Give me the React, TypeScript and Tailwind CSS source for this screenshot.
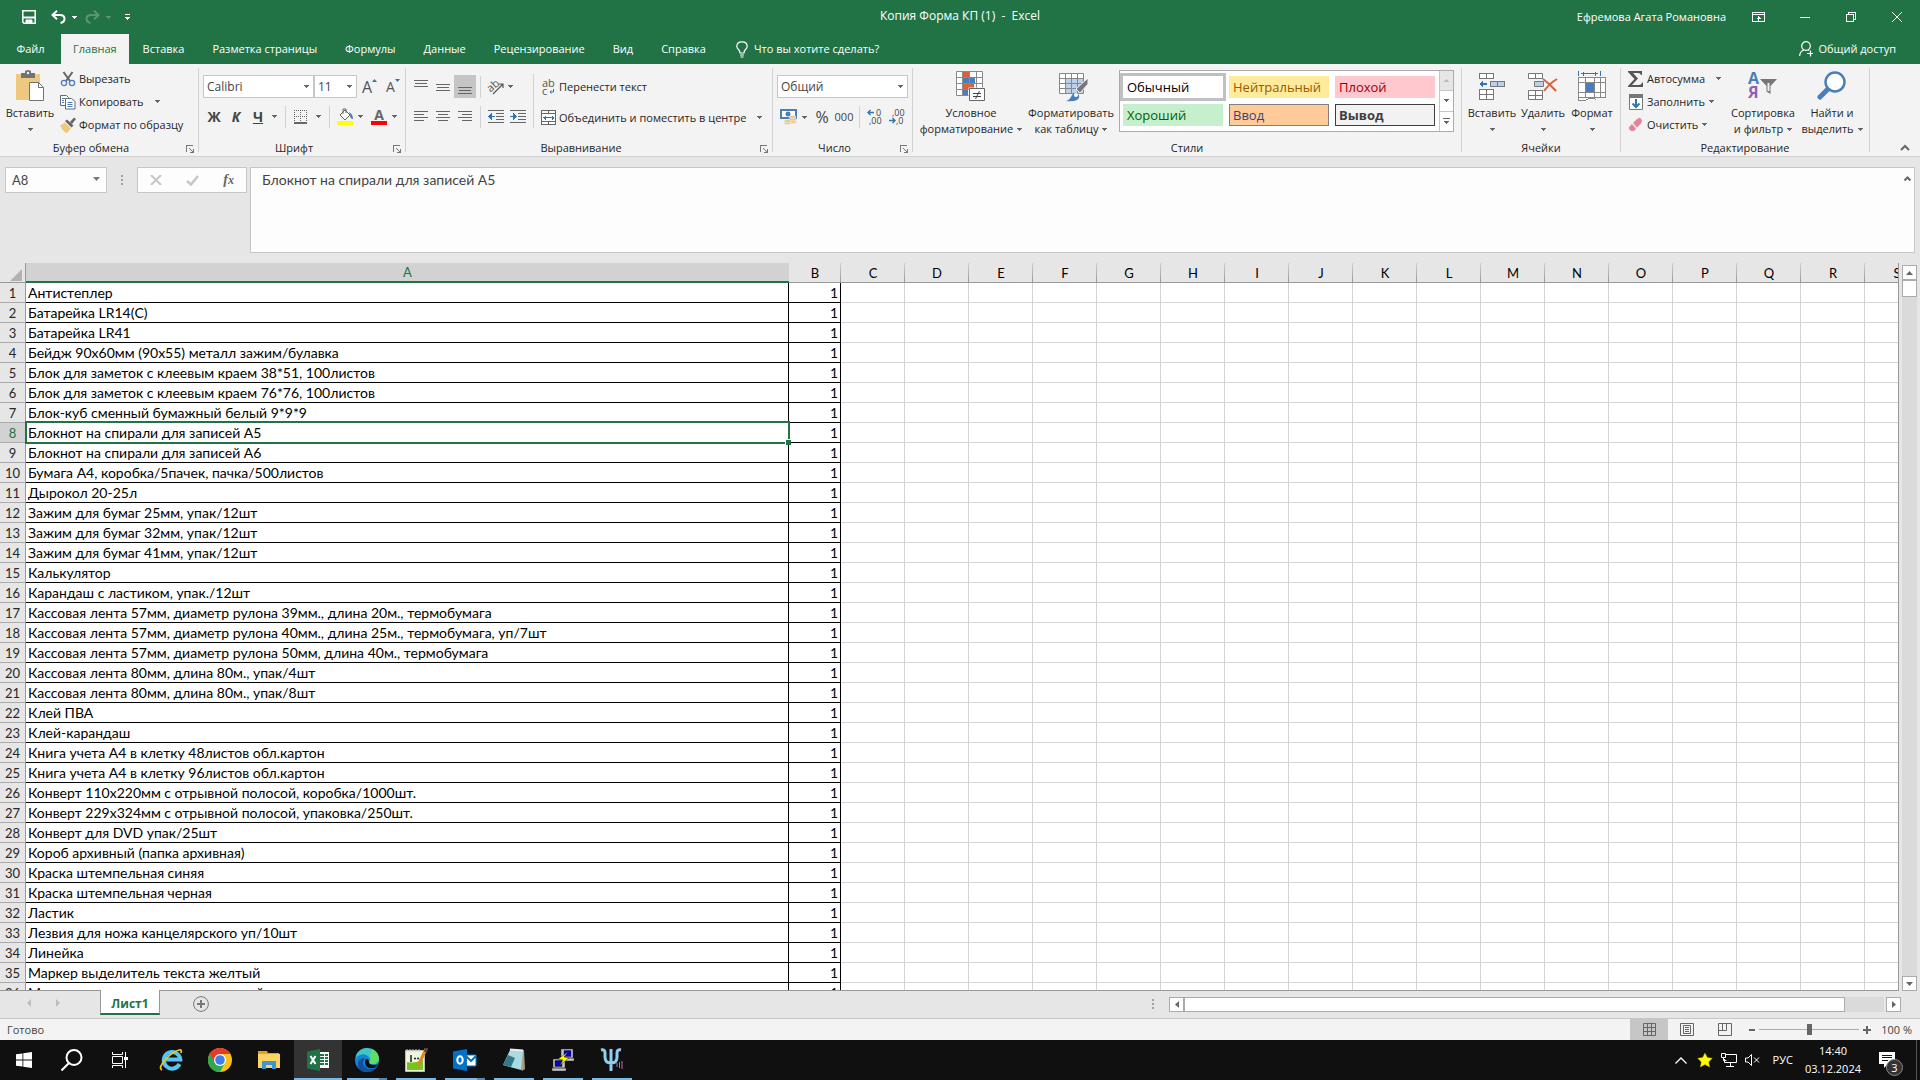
import { type FC, type ReactNode } from "react";

const items = [
  "Антистеплер",
  "Батарейка LR14(С)",
  "Батарейка LR41",
  "Бейдж 90х60мм (90х55) металл зажим/булавка",
  "Блок для заметок с клеевым краем 38*51, 100листов",
  "Блок для заметок с клеевым краем 76*76, 100листов",
  "Блок-куб сменный бумажный белый 9*9*9",
  "Блокнот на спирали для записей А5",
  "Блокнот на спирали для записей А6",
  "Бумага А4, коробка/5пачек, пачка/500листов",
  "Дырокол 20-25л",
  "Зажим для бумаг 25мм, упак/12шт",
  "Зажим для бумаг 32мм, упак/12шт",
  "Зажим для бумаг 41мм, упак/12шт",
  "Калькулятор",
  "Карандаш с ластиком, упак./12шт",
  "Кассовая лента 57мм, диаметр рулона 39мм., длина 20м., термобумага",
  "Кассовая лента 57мм, диаметр рулона 40мм., длина 25м., термобумага, уп/7шт",
  "Кассовая лента 57мм, диаметр рулона 50мм, длина 40м., термобумага",
  "Кассовая лента 80мм, длина 80м., упак/4шт",
  "Кассовая лента 80мм, длина 80м., упак/8шт",
  "Клей ПВА",
  "Клей-карандаш",
  "Книга учета А4 в клетку 48листов обл.картон",
  "Книга учета А4 в клетку 96листов обл.картон",
  "Конверт 110х220мм с отрывной полосой, коробка/1000шт.",
  "Конверт 229х324мм с отрывной полосой, упаковка/250шт.",
  "Конверт для DVD упак/25шт",
  "Короб архивный (папка архивная)",
  "Краска штемпельная синяя",
  "Краска штемпельная черная",
  "Ластик",
  "Лезвия для ножа канцелярского уп/10шт",
  "Линейка",
  "Маркер выделитель текста желтый",
  "Маркер выделитель текста зеленый",
];

const emptyColumns = "CDEFGHIJKLMNOPQRS".split("");
const tabs = ["Вставка", "Разметка страницы", "Формулы", "Данные", "Рецензирование", "Вид", "Справка"];

const Arrow: FC<{ className?: string }> = ({ className = "text-[#666]" }) => (
  <svg width="5" height="3" viewBox="0 0 5 3" className={`shrink-0 ${className}`} shapeRendering="crispEdges">
    <path d="M0 0h5v1H0zM1 1h3v1H1zM2 2h1v1H2z" fill="currentColor" />
  </svg>
);

const Dots = () => (
  <svg width="2" height="10" className="shrink-0" fill="#a0a0a0">
    <path d="M0 0h2v2H0zM0 4h2v2H0zM0 8h2v2H0z" />
  </svg>
);

/* ---------- ribbon icons ---------- */

const PasteIcon = () => (
  <svg width="30" height="32" viewBox="0 0 30 32">
    <path d="M1 4h24v26H1z" fill="#edc87e" />
    <path d="M6 3h4V1.500Q10 0 13 0t3 1.500V3h4v5H6z" fill="#737373" />
    <circle cx="13" cy="3" r="1.200" fill="#f3f3f3" />
    <path d="M14.500 12.500h9l5 5v13h-14z" fill="#fff" stroke="#737373" />
    <path d="M23.500 12.500v5h5" fill="none" stroke="#737373" />
  </svg>
);

const CutIcon = () => (
  <svg width="16" height="16" viewBox="0 0 16 16" fill="none">
    <path d="M3.500 1l6.500 9M12.500 1L6 10" stroke="#666" strokeWidth="2" />
    <circle cx="4" cy="12" r="2.600" stroke="#4a7ebb" strokeWidth="1.300" />
    <circle cx="12" cy="12" r="2.600" stroke="#4a7ebb" strokeWidth="1.300" />
  </svg>
);

const CopyIcon = () => (
  <svg width="16" height="16" viewBox="0 0 16 16" fill="#fff" stroke="#6a6a6a">
    <path d="M.5 1.500h6l2 2v8h-8z" />
    <path d="M5.500 4.500h6l3.500 3v7.500H5.500z" />
    <path d="M2 4.500h3M2 6.500h2M2 8.500h2M7.500 8.500h5M7.500 10.500h5M7.500 12.500h5" stroke="#4a7ebb" />
  </svg>
);

const BrushIcon = () => (
  <svg width="16" height="16" viewBox="0 0 16 16">
    <path d="M0 8.500l5-3 6 6-4 4.500q-3 0-7-7.500z" fill="#edc87e" />
    <path d="M5 4l2-1.500 6.500 6-2 2zM10 5l4-4.500L16 2l-4 5z" fill="#666" />
  </svg>
);

const AlignIcon: FC<{ d: string }> = ({ d }) => (
  <svg width="14" height="14" viewBox="0 0 14 14" stroke="#666" shapeRendering="crispEdges">
    <path d={d} />
  </svg>
);

const BordersIcon = () => (
  <svg width="14" height="14" viewBox="0 0 14 14" stroke="#666" shapeRendering="crispEdges" fill="none">
    <path d="M0 .5h13M.5 0v13M12.500 0v13M6.500 0v13M0 6.500h13" strokeDasharray="1 1" />
    <path d="M0 12.500h13" strokeWidth="2" />
  </svg>
);

const FillIcon = () => (
  <svg width="17" height="17" viewBox="0 0 17 17">
    <path d="M3 7l5-5 5 5-5 5z" fill="#fff" stroke="#666" />
    <path d="M6 6V1h3v4" fill="none" stroke="#666" />
    <path d="M12 4q4 2 4 7-3 0-3-4z" fill="#4a7ebb" />
    <path d="M0 13h16v4H0z" fill="#ff0" />
  </svg>
);

const IndentIcon: FC<{ right?: boolean }> = ({ right }) => (
  <svg width="16" height="14" viewBox="0 0 16 14" shapeRendering="crispEdges">
    <path d="M0 .5h16M8 3.500h8M8 6.500h8M8 9.500h8M0 12.500h16" stroke="#666" />
    <path d={right ? "M0 6h3V3l4 3.500L3 10V7H0z" : "M7 6H4V3L0 6.500 4 10V7h3z"} fill="#2e75b6" />
  </svg>
);

const OrientationIcon = () => (
  <svg width="17" height="16" viewBox="0 0 17 16" className="overflow-visible">
    <text x="0" y="11" fontSize="11" fill="#555" transform="rotate(-42 5 9)">ab</text>
    <path d="M5 15L15 5M11 5h4v4" stroke="#555" fill="none" strokeWidth="1.200" />
  </svg>
);

const WrapIcon = () => (
  <svg width="15" height="16" viewBox="0 0 15 16" className="overflow-visible">
    <text x="1" y="8" fontSize="11" fill="#555">ab</text>
    <text x="1" y="16" fontSize="11" fill="#555">c</text>
    <path d="M12.500 10v3H9M10.500 11.500L9 13l1.500 1.500" stroke="#2e75b6" fill="none" />
  </svg>
);

const MergeIcon = () => (
  <svg width="15" height="15" viewBox="0 0 15 15" fill="#fff" stroke="#666" shapeRendering="crispEdges">
    <path d="M.5.5h14v14H.5zM.5 3.500h14M.5 11.500h14M7.500.5v3M7.500 11.500v3" />
    <path d="M2 7.500h11M4 5.500v4M11 5.500v4M3 6.500v2M12 6.500v2" stroke="#2e75b6" />
  </svg>
);

const MoneyIcon = () => (
  <svg width="17" height="16" viewBox="0 0 17 16">
    <path d="M1 1h15v8H1z" fill="#fff" stroke="#4a7ebb" strokeWidth="2" />
    <circle cx="8" cy="5" r="2.500" fill="#4a7ebb" />
    <g fill="#edc87e" stroke="#f3f3f3" strokeWidth=".6">
      <ellipse cx="13" cy="13" rx="3.500" ry="1.600" />
      <ellipse cx="13" cy="10.500" rx="3.500" ry="1.600" />
      <ellipse cx="12.500" cy="8" rx="3.500" ry="1.600" />
      <ellipse cx="7.500" cy="14" rx="3.500" ry="1.600" />
      <ellipse cx="7.500" cy="12" rx="3.500" ry="1.600" />
    </g>
  </svg>
);

const DecimalIcon: FC<{ less?: boolean }> = ({ less }) => (
  <svg width="16" height="16" viewBox="0 0 16 16" fontSize="9" fill="#444" className="overflow-visible">
    <text x={less ? 3 : 9} y="7">{less ? ",00" : "0"}</text>
    <text x={less ? 7 : 2} y="15">{less ? ",0" : ",00"}</text>
    <path d={less ? "M0 11.500h6M3.500 9L6 11.500 3.500 14" : "M7 3.500H1M3.500 1L1 3.500 3.500 6"} fill="none" stroke="#2e75b6" strokeWidth="1.400" />
  </svg>
);

const ConditionalIcon = () => (
  <svg width="30" height="32" viewBox="0 0 30 32">
    <path d="M.5 1.500h26v24H.5z" fill="#fff" />
    <path d="M7 2h6v5H7zM7 14h11v5H7z" fill="#d9603b" />
    <path d="M7 8h12v5H7zM7 20h5v5H7z" fill="#4a7ebb" />
    <path d="M.5 1.500h26v24H.5zM.5 7.500h26M.5 13.500h26M.5 19.500h26M6.500 1.500v24M13.500 1.500v24M20.500 1.500v24" fill="none" stroke="#8a8a8a" />
    <path d="M12.500 17.500h17v14h-17z" fill="#f3f3f3" />
    <path d="M13.500 18.500h15v12h-15z" fill="#fff" stroke="#666" />
    <path d="M17 23.500h8M17 26.500h8M23.500 21l-4 8" stroke="#444" />
  </svg>
);

const FormatTableIcon = () => (
  <svg width="35" height="32" viewBox="-5 0 35 32">
    <path d="M.5 3.500h24v20H.5z" fill="#fff" />
    <path d="M6 8h18v15H6z" fill="#bdd0ea" />
    <path d="M.5 3.500h24v20H.5zM.5 8.500h24M.5 13.500h24M.5 18.500h24M6.500 3.500v20M12.500 3.500v20M18.500 3.500v20" fill="none" stroke="#888" />
    <path d="M29 8v6l-8 9-4-4z" fill="#777" stroke="#f3f3f3" />
    <path d="M7 31q4-1 6-6 3-4 6-1 3 3-1 6-4 2-11 1z" fill="#4a7ebb" />
    <circle cx="17" cy="25" r="2" fill="#fff" />
  </svg>
);

const InsertIcon = () => (
  <svg width="28" height="30" viewBox="0 0 28 30" fill="#fff" stroke="#777" shapeRendering="crispEdges">
    <path d="M1.500 2.500h14v5h-14zM8.500 2.500v5M1.500 18.500h14v10h-14zM8.500 18.500v10M1.500 23.500h14" />
    <path d="M12.500 10.500h14v5h-14zM19.500 10.500v5" fill="#bdd0ea" />
    <path d="M9 13H3M5 10.500L2.500 13 5 15.500" stroke="#2e75b6" strokeWidth="2" fill="none" />
  </svg>
);

const DeleteIcon = () => (
  <svg width="30" height="30" viewBox="0 0 30 30" fill="#fff" stroke="#777">
    <path d="M.5 2.500h14v5H.5zM7.500 2.500v5M.5 19.500h14v9H.5zM7.500 19.500v9M.5 24.500h14" />
    <path d="M6.500 10.500h9v5h-9z" fill="#bdd0ea" />
    <path d="M15 8q7 5 13 12M29 8q-7 4-13 12" stroke="#d9603b" strokeWidth="2" fill="none" />
  </svg>
);

const FormatIcon = () => (
  <svg width="28" height="32" viewBox="0 0 28 32" fill="#fff" stroke="#888" shapeRendering="crispEdges">
    <path d="M.5 7.500h27v20H.5zM.5 12.500h27M.5 22.500h27M7.500 7.500v20M16.500 7.500v20M22.500 7.500v20" />
    <path d="M8 13h8v9H8z" fill="#4a7ebb" stroke="none" />
    <path d="M.5 28v2.500h7l3-2h6l2 2" />
    <path d="M.5 1v5M22.500 1v5M3 3.500h17M5.500 1.500v4M17.500 1.500v4" stroke="#2e75b6" />
  </svg>
);

const SortIcon = () => (
  <svg width="30" height="32" viewBox="0 0 30 32" fontWeight="700" fontSize="16" className="overflow-visible">
    <text x="0" y="14" fill="#4a7ebb">A</text>
    <text x="0" y="28" fill="#8e61b5">Я</text>
    <path d="M12 9h17l-6.500 7v8l-4-2.500V16z" fill="#777" />
    <path d="M20.500 13v8" stroke="#f3f3f3" strokeWidth="2" />
  </svg>
);

const FindIcon = () => (
  <svg width="30" height="32" viewBox="0 0 30 32" fill="none" stroke="#4a7ebb">
    <path d="M12 18L3 27" strokeWidth="5" strokeLinecap="round" />
    <circle cx="18" cy="12" r="9.500" strokeWidth="2.500" fill="#fff" />
  </svg>
);

const SigmaIcon = () => (
  <svg width="16" height="16" viewBox="0 0 16 16">
    <path d="M0 0h14v4h-1q-.5-2-3-2H5l5 5.500L4 14h6.500q3 0 3.500-2.500h1V16H0v-1l6.500-7L0 1z" fill="#555" />
  </svg>
);

const FillDownIcon = () => (
  <svg width="16" height="16" viewBox="0 0 16 16">
    <path d="M1.500.5h13v15h-13z" fill="#fff" stroke="#777" />
    <path d="M1 0h14v4H1z" fill="#777" />
    <path d="M8 5v8M4.500 9.500L8 13l3.500-3.500" stroke="#2e75b6" strokeWidth="2" fill="none" />
  </svg>
);

const EraserIcon = () => (
  <svg width="16" height="16" viewBox="0 0 16 16" fill="#e8829a">
    <path d="M9 2l3-1.500 2 3-1 3-4 4-4-4.500zM4 7l4 4.500-2 2.500H3L1 12v-2z" />
  </svg>
);

/* ---------- ribbon parts ---------- */

const Separator = () => <div className="mt-1 h-[84px] w-px shrink-0 bg-[#d2d2d2]" />;

const Group: FC<{ label: string; width: string; launcher?: boolean; children: ReactNode }> = ({
  label,
  width,
  launcher,
  children,
}) => (
  <section className={`flex shrink-0 flex-col ${width}`} aria-label={label}>
    <div className="flex h-[76px] items-start pt-[3px]">{children}</div>
    <div className="relative flex h-4 items-center justify-center text-[#262626]">
      <span className={launcher ? "pr-4" : ""}>{label}</span>
      {launcher && (
        <button className="absolute top-[5px] right-1" aria-label={`Параметры: ${label}`}>
          <svg width="8" height="8" viewBox="0 0 8 8" stroke="#777" fill="none" shapeRendering="crispEdges">
            <path d="M.5 7V.5H7M3 3l4 4M7.500 4v3.500H4" />
          </svg>
        </button>
      )}
    </div>
  </section>
);

const BigButton: FC<{ icon: ReactNode; lines: string[]; width: string }> = ({ icon, lines, width }) => (
  <button className={`flex shrink-0 flex-col items-center ${width}`}>
    <span className="flex h-[38px] items-center">{icon}</span>
    <span className="h-4 whitespace-nowrap leading-4">{lines[0]}</span>
    <span className="flex h-4 items-center gap-1 whitespace-nowrap leading-4">
      {lines[1]}
      <Arrow />
    </span>
  </button>
);

const RowButton: FC<{ icon: ReactNode; label: string; arrow?: string }> = ({ icon, label, arrow }) => (
  <button className="flex h-[23px] items-center gap-[3px] whitespace-nowrap">
    {icon}
    <span>{label}</span>
    {arrow && <Arrow className={`text-[#666] ${arrow}`} />}
  </button>
);

const IconButton: FC<{ label: string; active?: boolean; children: ReactNode }> = ({ label, active, children }) => (
  <button
    aria-label={label}
    className={`flex h-[23px] w-[22px] shrink-0 items-center justify-center ${active ? "bg-[#c5c5c5]" : ""}`}
  >
    {children}
  </button>
);

const Combo: FC<{ label: string; value: string; width: string }> = ({ label, value, width }) => (
  <div className={`relative flex h-[23px] items-center text-xs ${width}`}>
    <select aria-label={label} className="h-full w-full appearance-none border border-[#c6c6c6] bg-white px-[3px] text-[#444]">
      <option>{value}</option>
    </select>
    <Arrow className="pointer-events-none absolute right-[5px] text-[#666]" />
  </div>
);

const Bar = () => <div className="h-[22px] w-px shrink-0 bg-[#d2d2d2]" />;

const Ribbon = () => (
  <div className="flex h-[93px] shrink-0 overflow-hidden border-b border-[#d2d2d2] bg-[#f3f3f3] text-[#262626]">
    <Group label="Буфер обмена" width="w-[198px]" launcher>
      <BigButton width="ml-[5px] w-[50px]" icon={<PasteIcon />} lines={["Вставить", ""]} />
      <div className="ml-[5px] flex flex-col">
        <RowButton icon={<CutIcon />} label="Вырезать" />
        <RowButton icon={<CopyIcon />} label="Копировать" arrow="ml-2" />
        <RowButton icon={<BrushIcon />} label="Формат по образцу" />
      </div>
    </Group>
    <Separator />

    <Group label="Шрифт" width="w-[206px]" launcher>
      <div className="ml-1 flex flex-col gap-[7px] pt-2">
        <div className="flex">
          <Combo label="Шрифт" value="Calibri" width="w-[111px]" />
          <Combo label="Размер шрифта" value="11" width="w-[43px]" />
          <button className="ml-[5px] flex h-[23px] w-6 items-center text-base text-[#555]" aria-label="Увеличить размер">
            А<svg width="5" height="3" className="mb-3"><path d="M0 3L2.500 0 5 3z" fill="#2e75b6" /></svg>
          </button>
          <button className="flex h-[23px] w-[22px] items-center text-sm text-[#555]" aria-label="Уменьшить размер">
            А<svg width="5" height="3" className="mb-3"><path d="M0 0l2.500 3L5 0z" fill="#2e75b6" /></svg>
          </button>
        </div>
        <div className="flex items-center text-[#444]">
          <button className="w-[22px] text-sm font-bold">Ж</button>
          <button className="w-[22px] text-sm font-bold italic">К</button>
          <button className="w-[22px] text-sm font-bold underline">Ч</button>
          <Arrow className="ml-[3px] text-[#666]" />
          <div className="ml-2"><Bar /></div>
          <div className="ml-1 flex items-center gap-1">
            <IconButton label="Границы"><BordersIcon /></IconButton>
            <Arrow />
          </div>
          <div className="ml-2"><Bar /></div>
          <div className="ml-1 flex items-center gap-[2px]">
            <IconButton label="Цвет заливки"><FillIcon /></IconButton>
            <Arrow />
          </div>
          <div className="ml-[5px] flex items-center gap-[2px]">
            <button className="flex h-[23px] w-[22px] flex-col items-center justify-center text-sm leading-3 font-bold text-[#666]">
              А<span className="h-1 w-4 bg-[#f00]" />
            </button>
            <Arrow />
          </div>
        </div>
      </div>
    </Group>
    <Separator />

    <Group label="Выравнивание" width="w-[366px]" launcher>
      <div className="ml-1 flex flex-col gap-[7px] pt-2">
        <div className="flex">
          <IconButton label="По верхнему краю"><AlignIcon d="M0 .5h14M1 3.500h12M0 6.500h14" /></IconButton>
          <IconButton label="По середине"><AlignIcon d="M0 4.500h14M1 7.500h12M0 10.500h14" /></IconButton>
          <IconButton label="По нижнему краю" active><AlignIcon d="M0 7.500h14M1 10.500h12M0 13.500h14" /></IconButton>
        </div>
        <div className="flex">
          <IconButton label="По левому краю"><AlignIcon d="M0 1.500h14M0 4.500h10M0 7.500h14M0 10.500h10" /></IconButton>
          <IconButton label="По центру"><AlignIcon d="M0 1.500h14M2 4.500h10M0 7.500h14M2 10.500h10" /></IconButton>
          <IconButton label="По правому краю"><AlignIcon d="M0 1.500h14M4 4.500h10M0 7.500h14M4 10.500h10" /></IconButton>
        </div>
      </div>
      <div className="ml-1 flex flex-col gap-[7px] pt-2">
        <div className="flex items-center">
          <Bar />
          <span className="mr-px ml-1"><IconButton label="Ориентация"><OrientationIcon /></IconButton></span>
          <Arrow />
        </div>
        <div className="flex items-center">
          <Bar />
          <span className="ml-1 flex">
            <IconButton label="Уменьшить отступ"><IndentIcon /></IconButton>
            <IconButton label="Увеличить отступ"><IndentIcon right /></IconButton>
          </span>
        </div>
      </div>
      <div className="mt-[7px] ml-1 h-[54px] w-px bg-[#d2d2d2]" />
      <div className="ml-[7px] flex flex-col gap-2 pt-2">
        <RowButton icon={<WrapIcon />} label="Перенести текст" />
        <RowButton icon={<MergeIcon />} label="Объединить и поместить в центре" arrow="ml-2" />
      </div>
    </Group>
    <Separator />

    <Group label="Число" width="w-[139px]" launcher>
      <div className="ml-1 flex flex-col gap-[7px] pt-2">
        <Combo label="Числовой формат" value="Общий" width="w-[131px]" />
        <div className="flex items-center">
          <IconButton label="Финансовый формат"><MoneyIcon /></IconButton>
          <Arrow className="ml-[3px] text-[#666]" />
          <button className="ml-1 w-[22px] text-base text-[#444]">%</button>
          <button className="w-[22px] text-[11px] text-[#444]">000</button>
          <div className="ml-1"><Bar /></div>
          <span className="ml-1 flex">
            <IconButton label="Увеличить разрядность"><DecimalIcon /></IconButton>
            <IconButton label="Уменьшить разрядность"><DecimalIcon less /></IconButton>
          </span>
        </div>
      </div>
    </Group>
    <Separator />

    <Group label="Стили" width="w-[548px]">
      <BigButton width="ml-1 w-[108px]" icon={<ConditionalIcon />} lines={["Условное", "форматирование"]} />
      <BigButton width="w-[92px]" icon={<FormatTableIcon />} lines={["Форматировать", "как таблицу"]} />
      <div className="mt-[3px] ml-[2px] flex h-[62px] border border-[#ababab] bg-white text-[13px] leading-5">
        <div className="grid grid-cols-[repeat(3,100px)] grid-rows-[repeat(2,22px)] gap-[6px] py-[5px] pr-1 pl-[3px] text-left">
          <button className="bg-white px-1 text-left text-black outline-3 outline-[#c0c0c0]">Обычный</button>
          <button className="bg-[#ffeb9c] px-1 text-left text-[#9c5700]">Нейтральный</button>
          <button className="bg-[#ffc7ce] px-1 text-left text-[#9c0006]">Плохой</button>
          <button className="bg-[#c6efce] px-1 text-left text-[#006100]">Хороший</button>
          <button className="border border-[#7f7f7f] bg-[#ffcc99] px-[3px] text-left text-[#3f3f76]">Ввод</button>
          <button className="border border-[#3f3f3f] bg-[#f2f2f2] px-[3px] text-left font-bold text-[#3f3f3f]">Вывод</button>
        </div>
        <div className="flex w-[14px] flex-col divide-y divide-[#c6c6c6] border-l border-[#c6c6c6]">
          <button className="flex flex-1 items-center justify-center bg-[#e6e6e6]" aria-label="Вверх"><Arrow className="rotate-180 text-[#bbb]" /></button>
          <button className="flex flex-1 items-center justify-center" aria-label="Вниз"><Arrow /></button>
          <button className="flex flex-1 flex-col items-center justify-center gap-[2px]" aria-label="Все стили">
            <span className="h-px w-[7px] bg-[#666]" />
            <Arrow />
          </button>
        </div>
      </div>
    </Group>
    <Separator />

    <Group label="Ячейки" width="w-[158px]">
      <BigButton width="ml-1 w-[52px]" icon={<InsertIcon />} lines={["Вставить", ""]} />
      <BigButton width="w-[50px]" icon={<DeleteIcon />} lines={["Удалить", ""]} />
      <BigButton width="w-[48px]" icon={<FormatIcon />} lines={["Формат", ""]} />
    </Group>
    <Separator />

    <Group label="Редактирование" width="w-[248px]">
      <div className="ml-[7px] flex w-[99px] flex-col">
        <RowButton icon={<SigmaIcon />} label="Автосумма" arrow="ml-2" />
        <RowButton icon={<FillDownIcon />} label="Заполнить" arrow="ml-px" />
        <RowButton icon={<EraserIcon />} label="Очистить" arrow="ml-px" />
      </div>
      <BigButton width="w-[72px]" icon={<SortIcon />} lines={["Сортировка", "и фильтр"]} />
      <BigButton width="w-[66px]" icon={<FindIcon />} lines={["Найти и", "выделить"]} />
    </Group>
    <Separator />
    <button className="mt-auto mr-[10px] mb-1 ml-auto" aria-label="Свернуть ленту">
      <svg width="10" height="8" viewBox="0 0 10 8" fill="none" stroke="#666" strokeWidth="2"><path d="M1 6l4-4 4 4" /></svg>
    </button>
  </div>
);

/* ---------- window header ---------- */

const Header = () => (
  <header className="shrink-0 bg-[#217346] text-white">
    <div className="relative flex h-[34px] items-center justify-between">
      <div className="flex items-center pl-[22px]">
        <button aria-label="Сохранить">
          <svg width="14" height="14" viewBox="0 0 14 14" fill="none" stroke="#fff" strokeWidth="1.500">
            <path d="M.8.800h12.400v12.400H2L.8 12z" />
            <path d="M1 7.500h12" strokeWidth="2" />
            <path d="M4 13v-3h6v3H7v-2H5.500v2z" fill="#fff" strokeWidth="1" />
          </svg>
        </button>
        <button className="ml-[15px]" aria-label="Отменить">
          <svg width="15" height="14" viewBox="0 0 15 14" fill="none" stroke="#fff" strokeWidth="2">
            <path d="M6 .8L1.500 5 6 9.200M2 5h7q4.500 0 4.500 4 0 3-4 4" />
          </svg>
        </button>
        <Arrow className="ml-[6px] text-white" />
        <button className="ml-2 opacity-25" aria-label="Повторить">
          <svg width="15" height="14" viewBox="0 0 15 14" fill="none" stroke="#fff" strokeWidth="2">
            <path d="M9 .8L13.500 5 9 9.200M13 5H6Q1.500 5 1.500 9q0 3 4 4" />
          </svg>
        </button>
        <Arrow className="ml-[6px] text-white/25" />
        <button className="ml-[14px] flex flex-col items-center gap-[2px]" aria-label="Настройка панели">
          <span className="h-px w-[5px] bg-white" />
          <Arrow className="text-white" />
        </button>
      </div>
      <h1 className="absolute inset-x-0 top-2 text-center text-xs leading-4 whitespace-pre">Копия Форма КП (1)  -  Excel</h1>
      <div className="relative flex items-center">
        <span className="mr-[26px]">Ефремова Агата Романовна</span>
        <button aria-label="Параметры ленты" className="mr-[35px]">
          <svg width="13" height="10" viewBox="0 0 13 10" fill="none" stroke="#fff" shapeRendering="crispEdges">
            <path d="M.5.5h12v9H.5zM.5 2.500h12M6.500 4v5M4.500 6.500h4M5.500 5.500h2" />
          </svg>
        </button>
        <button aria-label="Свернуть" className="mr-9 h-px w-[10px] bg-white" />
        <button aria-label="Восстановить" className="mr-9">
          <svg width="10" height="10" viewBox="0 0 10 10" fill="none" stroke="#fff" shapeRendering="crispEdges">
            <path d="M.5 2.500h7v7h-7zM2.500 2.500v-2h7v7h-2" />
          </svg>
        </button>
        <button aria-label="Закрыть" className="mr-[18px]">
          <svg width="10" height="10" viewBox="0 0 10 10" fill="none" stroke="#fff"><path d="M0 0l10 10M10 0L0 10" /></svg>
        </button>
      </div>
    </div>
    <nav className="flex h-[30px] items-stretch leading-[30px]">
      <button className="w-[61px]">Файл</button>
      <button className="bg-[#f3f3f3] px-3 text-[#217346]">Главная</button>
      {tabs.map((tab) => (
        <button key={tab} className="px-[14px]">{tab}</button>
      ))}
      <button className="ml-4 flex items-center gap-[6px]">
        <svg width="12" height="17" viewBox="0 0 12 17" fill="none" stroke="#fff" strokeWidth="1.200">
          <path d="M4 12q0-2-1.500-3.500Q.8 7 .8 5.500.8.800 6 .8t5.200 4.700q0 1.500-1.700 3Q8 10 8 12zM4 14h4M4.500 16h3" />
        </svg>
        Что вы хотите сделать?
      </button>
      <button className="mr-6 ml-auto flex items-center gap-1">
        <svg width="15" height="16" viewBox="0 0 15 16" fill="none" stroke="#fff" strokeWidth="1.200">
          <circle cx="7" cy="5" r="4.300" />
          <path d="M.6 15q.5-5 4.400-6M9 9l1 .5M8 12.500h6M11.500 9.500v6" />
        </svg>
        Общий доступ
      </button>
    </nav>
  </header>
);

const FormulaBar = () => (
  <div className="flex h-[106px] shrink-0 bg-[#e6e6e6] px-[5px] py-[10px]">
    <div className="relative h-[26px] w-[102px] shrink-0">
      <input aria-label="Имя" defaultValue="A8" className="h-full w-full border border-[#c6c6c6] bg-[#fdfdfd] px-[6px] font-[Lato,sans-serif] text-[13px] text-[#444]" />
      <svg width="7" height="4" className="absolute top-[10px] right-[7px]"><path d="M0 0h7L3.500 4z" fill="#777" /></svg>
    </div>
    <div className="mt-2 ml-[14px]"><Dots /></div>
    <div className="ml-[14px] flex h-[26px] w-[110px] shrink-0 items-center justify-around border border-[#c6c6c6] bg-[#fdfdfd]">
      <button aria-label="Отмена">
        <svg width="12" height="10" viewBox="0 0 12 10" stroke="#c6c6c6" strokeWidth="2"><path d="M1 0l10 10M11 0L1 10" /></svg>
      </button>
      <button aria-label="Ввод">
        <svg width="13" height="11" viewBox="0 0 13 11" fill="none" stroke="#c6c6c6" strokeWidth="2.500"><path d="M1 6l4 3.500L12 1" /></svg>
      </button>
      <button aria-label="Вставить функцию" className="font-[Liberation_Serif,serif] text-sm leading-4 font-bold text-[#666] italic">
        f<span className="text-xs">x</span>
      </button>
    </div>
    <div className="relative ml-[3px] flex-1">
      <textarea
        aria-label="Строка формул"
        defaultValue="Блокнот на спирали для записей А5"
        className="block h-[86px] w-full resize-none border border-[#c6c6c6] bg-[#fdfdfd] px-[11px] py-[2px] font-[Lato,sans-serif] text-sm leading-5 text-[#444]"
      />
      <svg width="7" height="5" viewBox="0 0 7 5" className="absolute top-[9px] right-1" fill="none" stroke="#666" strokeWidth="2"><path d="M.5 4.500l3-3 3 3" /></svg>
    </div>
  </div>
);

/* ---------- sheet ---------- */

const headCell =
  "h-[20px] border-b border-[#999] bg-[linear-gradient(#d0d0d0,#999)] bg-[length:1px_100%] bg-right bg-no-repeat px-0 pt-px pb-0 text-center leading-[18px] font-normal";

const Sheet = () => (
  <div className="flex min-h-0 flex-1 bg-[#e6e6e6]">
    <div className="min-w-0 flex-1 overflow-hidden border-r border-b border-[#999]">
      <table className="w-[1929px] table-fixed border-separate border-spacing-0 bg-white font-[Lato,sans-serif] text-[13px] leading-[18px] text-black">
        <colgroup>
          <col className="w-[26px]" />
          <col className="w-[763px]" />
          <col className="w-[52px]" />
          {emptyColumns.map((c) => <col key={c} className="w-[64px]" />)}
        </colgroup>
        <thead className="bg-[#e6e6e6]">
          <tr>
            <th className="h-[20px] border-r border-b border-[#999] p-0" aria-label="Выделить все">
              <svg width="12" height="12" className="mt-1 ml-[10px] block"><path d="M12 0v12H0z" fill="#b2b2b2" /></svg>
            </th>
            <th className="h-[20px] border-b-2 border-[#217346] bg-[#d2d2d2] px-0 pt-px pb-0 text-center leading-[17px] font-normal text-[#217346]">A</th>
            <th className={headCell}>B</th>
            {emptyColumns.map((c) => <th key={c} className={headCell}>{c}</th>)}
          </tr>
        </thead>
        <tbody>
          {items.map((name, i) => {
            const selected = i === 7;
            return (
              <tr key={i}>
                <th
                  className={`h-[20px] border-r border-b px-0 pt-px pb-0 text-center font-normal ${
                    selected ? "border-r-[#217346] border-b-[#ababab] bg-[#d2d2d2] text-[#217346]" : "border-r-[#999] border-b-[#ababab] bg-[#e6e6e6] text-[#262626]"
                  }`}
                >
                  {i + 1}
                </th>
                <td className="relative border-r border-b border-black py-0 pr-0 pl-[2px] text-sm leading-[19px] whitespace-nowrap">
                  {name}
                  {selected && (
                    <span className="absolute -top-[2px] -right-[2px] -bottom-[2px] -left-px z-10 border-2 border-[#217346]">
                      <span className="absolute -right-[3px] -bottom-[3px] size-[6px] border-t border-l border-white bg-[#217346]" />
                    </span>
                  )}
                </td>
                <td className="border-r border-b border-black py-0 pr-[2px] pl-0 text-right text-sm leading-[19px]">1</td>
                {emptyColumns.map((c) => <td key={c} className="border-r border-b border-[#d4d4d4] p-0" />)}
              </tr>
            );
          })}
        </tbody>
      </table>
    </div>
    <div className="mt-[2px] mr-[3px] ml-[3px] flex w-[15px] shrink-0 flex-col bg-[#dadada]">
      <button className="flex h-[15px] items-center justify-center border border-[#ababab] bg-white" aria-label="Прокрутить вверх">
        <svg width="7" height="4"><path d="M0 4l3.500-4L7 4z" fill="#666" /></svg>
      </button>
      <div className="h-[17px] border border-[#ababab] bg-white" />
      <button className="mt-auto flex h-[15px] items-center justify-center border border-[#ababab] bg-white" aria-label="Прокрутить вниз">
        <svg width="7" height="4"><path d="M0 0h7L3.500 4z" fill="#666" /></svg>
      </button>
    </div>
  </div>
);

const SheetTabs = () => (
  <div className="flex h-[28px] shrink-0 items-start border-b border-[#c6c6c6] bg-[#e6e6e6]">
    <button className="mt-2 ml-[27px]" aria-label="Предыдущий лист">
      <svg width="4" height="8"><path d="M4 0v8L0 4z" fill="#bdbdbd" /></svg>
    </button>
    <button className="mt-2 ml-[25px]" aria-label="Следующий лист">
      <svg width="4" height="8"><path d="M0 0v8l4-4z" fill="#bdbdbd" /></svg>
    </button>
    <button className="-mt-px ml-10 h-[25px] w-[60px] border-x border-b-2 border-x-[#999] border-b-[#217346] bg-white pt-1 text-xs font-bold text-[#217346]">
      Лист1
    </button>
    <button className="mt-[5px] ml-[33px]" aria-label="Новый лист">
      <svg width="16" height="16" viewBox="0 0 16 16" fill="none" stroke="#777"><circle cx="8" cy="8" r="7.400" /><path d="M8 4v8M4 8h8" strokeWidth="2" /></svg>
    </button>
    <div className="mt-2 mr-[15px] ml-auto"><Dots /></div>
    <div className="mt-[6px] mr-[19px] flex h-[15px] w-[732px]">
      <button className="flex w-[15px] items-center justify-center border border-[#ababab] bg-white" aria-label="Прокрутить влево">
        <svg width="4" height="7"><path d="M4 0v7L0 3.500z" fill="#666" /></svg>
      </button>
      <div className="w-[661px] border border-[#ababab] bg-white" />
      <div className="mr-[2px] flex-1 bg-[#dadada]" />
      <button className="flex w-[15px] items-center justify-center border border-[#ababab] bg-white" aria-label="Прокрутить вправо">
        <svg width="4" height="7"><path d="M0 0v7l4-3.500z" fill="#666" /></svg>
      </button>
    </div>
  </div>
);

const StatusBar = () => (
  <div className="flex h-[21px] shrink-0 items-center bg-[#f3f3f3] pr-2 pl-[7px] text-[#444]">
    <span>Готово</span>
    <button className="ml-auto flex h-full w-[38px] items-center justify-center bg-[#c6c6c6]" aria-label="Обычный">
      <svg width="13" height="13" stroke="#666" fill="none"><path d="M.5.5h12v12H.5zM.5 4.500h12M.5 8.500h12M4.500.5v12M8.500.5v12" /></svg>
    </button>
    <button className="flex w-[38px] justify-center" aria-label="Разметка страницы">
      <svg width="14" height="13" stroke="#666" fill="none"><path d="M.5.5h13v12H.5zM3.500 2.500h7v8h-7zM5 4.500h4M5 6.500h4M5 8.500h4" /></svg>
    </button>
    <button className="flex w-[38px] justify-center" aria-label="Страничный режим">
      <svg width="14" height="13" stroke="#666" fill="none"><path d="M.5.5h13v12H.5zM.5 7.500h8v-7M4.500.5v7" /></svg>
    </button>
    <button className="ml-[5px] h-[2px] w-[6px] bg-[#666]" aria-label="Уменьшить" />
    <input
      type="range"
      aria-label="Масштаб"
      min={0}
      max={100}
      defaultValue={50}
      className="mx-1 h-[11px] w-[100px] appearance-none bg-[linear-gradient(#ababab,#ababab)] bg-[length:100%_1px] bg-center bg-no-repeat [&::-webkit-slider-thumb]:h-[11px] [&::-webkit-slider-thumb]:w-[5px] [&::-webkit-slider-thumb]:appearance-none [&::-webkit-slider-thumb]:bg-[#666]"
    />
    <button aria-label="Увеличить">
      <svg width="8" height="8" stroke="#666" strokeWidth="2"><path d="M4 0v8M0 4h8" /></svg>
    </button>
    <span className="ml-[10px]">100 %</span>
  </div>
);

/* ---------- taskbar ---------- */

const TaskButton: FC<{ label: string; line?: "one" | "many"; active?: boolean; children: ReactNode }> = ({
  label,
  line,
  active,
  children,
}) => (
  <button aria-label={label} className={`relative flex h-10 w-12 shrink-0 items-center justify-center ${active ? "bg-[#333]" : ""}`}>
    {children}
    {line && (
      <span className={`absolute bottom-0 flex h-[2px] ${active ? "inset-x-0" : "inset-x-1"}`}>
        <span className="flex-1 bg-[#76b9ed]" />
        {line === "many" && <span className="w-2 bg-[#5a88b0]" />}
      </span>
    )}
  </button>
);

const Taskbar = () => (
  <footer className="flex h-10 shrink-0 bg-[#101010] text-white">
    <TaskButton label="Пуск">
      <svg width="16" height="16" fill="#fff"><path d="M0 2.300L6.500 1.400v6.200H0zM7.300 1.300L16 0v7.600H7.300zM0 8.400h6.500v6.200L0 13.700zM7.300 8.400H16V16l-8.700-1.300z" /></svg>
    </TaskButton>
    <TaskButton label="Поиск">
      <svg width="22" height="22" viewBox="0 0 22 22" fill="none" stroke="#fff" strokeWidth="2"><circle cx="13" cy="8.500" r="7.500" /><path d="M8 14l-7.500 7.500" /></svg>
    </TaskButton>
    <TaskButton label="Представление задач">
      <svg width="16" height="16" viewBox="0 0 16 16" fill="none" stroke="#fff"><path d="M.5 0v2.500h10V0M.5 4.500h10v7H.5zM.5 16v-2.500h10V16M13.500 0v16" /><path d="M12 5h4v3h-4z" fill="#fff" stroke="none" /></svg>
    </TaskButton>
    <div className="ml-[3px] flex gap-px">
      <TaskButton label="Internet Explorer">
        <svg width="24" height="24" viewBox="0 0 24 24" fill="none">
          <path d="M20.500 16a8.300 8.300 0 1 1 .8-4.500H7" stroke="#55c5f4" strokeWidth="4" />
          <path d="M3 22q-4-2 3-10T20 2q3-1 2 3" stroke="#f5c518" strokeWidth="1.800" />
        </svg>
      </TaskButton>
      <TaskButton label="Chrome">
        <svg width="24" height="24" viewBox="0 0 24 24">
          <circle cx="12" cy="12" r="12" fill="#fbc116" />
          <path d="M12 12L1.600 6A12 12 0 0 0 12 24l5-9z" fill="#2da94f" />
          <path d="M1.600 6A12 12 0 0 1 22.400 6H12l-5 9z" fill="#e33b2e" />
          <circle cx="12" cy="12" r="6" fill="#fff" />
          <circle cx="12" cy="12" r="4.800" fill="#3f7de8" />
        </svg>
      </TaskButton>
      <TaskButton label="Проводник">
        <svg width="22" height="20" viewBox="0 0 22 20">
          <path d="M0 1h9l1 2h11v15H0z" fill="#e5a11f" />
          <path d="M0 4h22v14H0z" fill="#fcd462" />
          <path d="M4 19v-8h14v8h-4v-4H8v4z" fill="#3b95d8" />
        </svg>
      </TaskButton>
      <TaskButton label="Excel" line="one" active>
        <svg width="22" height="22" viewBox="0 0 22 22">
          <path d="M12 3h10v16H12z" fill="#fff" />
          <path d="M13 5h4v2h-4zM18 5h3v2h-3zM13 8h4v2h-4zM18 8h3v2h-3zM13 11h4v2h-4zM18 11h3v2h-3zM13 14h4v2h-4zM18 14h3v2h-3z" fill="#217346" />
          <path d="M0 2.500L13 0v22L0 19.500z" fill="#217346" />
          <path d="M3.500 7l5 8M8.500 7l-5 8" stroke="#fff" strokeWidth="2" />
        </svg>
      </TaskButton>
      <TaskButton label="Edge" line="many">
        <svg width="24" height="24" viewBox="0 0 24 24">
          <circle cx="12" cy="12" r="12" fill="#1583d8" />
          <path d="M1 8Q4 0 12 0q10 0 12 10 0 6-6 6-4 0-4-2 2-2 0-5-4-4-9-2-3 1-4 3z" fill="#3fc8c0" />
          <path d="M17 1q6 3 7 9 0 6-6 6-4 0-4-2 3-3 1-6z" fill="#5fdc62" />
          <path d="M10 10q-4 5 0 9 5 4 12 0-3 5-10 5-9 0-9-8 0-6 7-6z" fill="#11509c" />
          <path d="M14 14q0 3 5 3 3 0 4-1l-2 3q-6 3-10-1-2-4 0-7 3 0 3 3z" fill="#101010" />
        </svg>
      </TaskButton>
      <TaskButton label="Notepad++" line="one">
        <svg width="24" height="24" viewBox="0 0 24 24">
          <path d="M1.500 2.500h19v21h-19z" fill="#eef7dc" stroke="#bbb" />
          <path d="M3 14q9 2 16-3v11H3z" fill="#76c51c" />
          <path d="M3 1v3M6 1v3M9 1v3M12 1v3M15 1v3" stroke="#ccc" />
          <path d="M7 7v7M10 10.500h2M13 10.500h2" stroke="#222" strokeWidth="1.500" />
          <path d="M22 1L14 18" stroke="#d98b22" strokeWidth="3" />
          <path d="M23 0l-2 4" stroke="#5b4634" strokeWidth="3" />
        </svg>
      </TaskButton>
      <TaskButton label="Outlook" line="many">
        <svg width="24" height="22" viewBox="0 0 24 22">
          <path d="M12 6h11v11H12z" fill="#fff" stroke="#0072c6" />
          <path d="M13 7l5 5 5-5" fill="none" stroke="#0072c6" strokeWidth="2" />
          <path d="M0 2.500L14 0v22L0 19.500z" fill="#0072c6" />
          <ellipse cx="7" cy="11" rx="2.700" ry="3.700" fill="none" stroke="#fff" strokeWidth="2" />
        </svg>
      </TaskButton>
      <TaskButton label="Блокнот" line="one">
        <svg width="24" height="24" viewBox="0 0 24 24">
          <path d="M8 2h14l1 19-3 2z" fill="#a69b85" />
          <path d="M8 2l13 1-2 19L1 17z" fill="#a9dbe5" />
          <path d="M6 7l7 3-4 9-8-2z" fill="#33788a" />
          <path d="M8 1.500l13 1" stroke="#eee" strokeWidth="2" />
        </svg>
      </TaskButton>
      <TaskButton label="PuTTY" line="one">
        <svg width="24" height="24" viewBox="0 0 24 24" stroke="#222" strokeWidth=".5">
          <path d="M10 1h12v9H10zM9 10h14v3H9zM2 11h12v9H2zM1 20h14v3H1z" fill="#c8c8c8" />
          <path d="M13 2.500h7v6h-7zM4 12.500h7v6H4z" fill="#00c" />
          <path d="M17 4L7 11l5 1-3 5 9-7-5-1z" fill="#ff0" />
        </svg>
      </TaskButton>
      <TaskButton label="Psi" line="one">
        <svg width="24" height="24" viewBox="0 0 24 24" fill="none">
          <path d="M1 2q4-1 4 3v4q0 6 6 6t6-6V5q0-4 4-3M11 1v22" stroke="#90cdf2" strokeWidth="3" />
          <path d="M17 15v4M19.500 14v6M22 13v8" stroke="#bd6bb1" />
        </svg>
      </TaskButton>
    </div>
    <div className="ml-auto flex items-center">
      <svg width="12" height="7" fill="none" stroke="#fff" strokeWidth="1.300"><path d="M.5 6.500L6 1l5.500 5.500" /></svg>
      <svg width="16" height="16" viewBox="0 0 16 16" className="ml-[10px]"><path d="M8 1l2.300 4.500 5 .8-3.600 3.600.9 5.100L8 12.500 3.400 15l.9-5.100L.7 6.300l5-.8z" fill="#ff0" stroke="#c9a400" strokeWidth=".5" /></svg>
      <svg width="16" height="14" viewBox="0 0 16 14" className="ml-2" fill="none" stroke="#fff"><path d="M5 1.500h10.500v8H3.500V6M9.500 10v3M5 13.500h8M.5.5h4v4h-4zM2.500 4.500v3h3" /></svg>
      <svg width="15" height="12" viewBox="0 0 15 12" className="ml-2" fill="none" stroke="#fff"><path d="M.5 4v4H3l3.500 3.500V.5L3 4zM9 3.500l5 5M14 3.500l-5 5" /></svg>
      <span className="ml-[13px]">РУС</span>
      <div className="ml-3 text-center leading-[18px]">
        <div>14:40</div>
        <div>03.12.2024</div>
      </div>
      <button className="relative ml-[18px] h-10 w-[36px]" aria-label="Уведомления: 3">
        <svg width="16" height="17" viewBox="0 0 16 17" className="absolute top-3 left-0"><path d="M0 0h16v12H9l-4 4v-4H0z" fill="#fff" /><path d="M3 3.500h10M3 5.500h10M3 8.500h6" stroke="#101010" /></svg>
        <span className="absolute top-[19px] left-[7px] flex size-[17px] items-center justify-center rounded-full border border-[#888] bg-[#333]">3</span>
      </button>
      <div className="ml-px h-10 w-px bg-[#555]" />
      <div className="w-[3px]" />
    </div>
  </footer>
);

export default function App() {
  return (
    <div className="flex h-screen flex-col overflow-hidden bg-[#e6e6e6] font-[Open_Sans,sans-serif] text-[11px] leading-4">
      <Header />
      <Ribbon />
      <FormulaBar />
      <Sheet />
      <SheetTabs />
      <StatusBar />
      <Taskbar />
    </div>
  );
}
